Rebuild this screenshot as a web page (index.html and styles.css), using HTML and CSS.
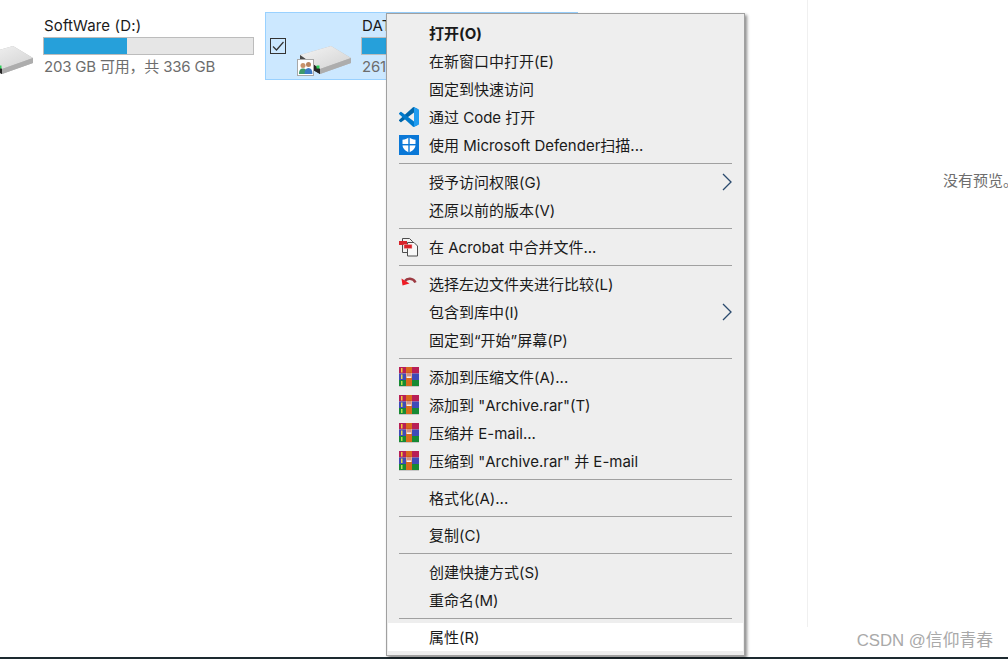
FILE: index.html
```html
<!DOCTYPE html>
<html lang="zh-CN">
<head>
<meta charset="utf-8">
<title>此电脑</title>
<link rel="stylesheet" href="styles.css">
</head>
<body>
<svg class="defs" width="0" height="0" aria-hidden="true">
  <defs>
    <linearGradient id="topface" x1="0" y1="0" x2="1" y2="1">
      <stop offset="0" stop-color="#f4f4f4"/><stop offset="1" stop-color="#d2d2d2"/>
    </linearGradient>
    <symbol id="drive" viewBox="0 0 54 30">
      <polygon points="2,10 33,1 53,13 53,18 22,29 2,16" fill="#b9b9b9"/>
      <polygon points="2,10 33,1 53,13 22,24" fill="url(#topface)"/>
      <polygon points="22,24 53,13 53,18 22,29" fill="#adadad"/>
      <polygon points="2,10 22,24 22,29 2,16" fill="#4a4a4a"/>
      <polygon points="13,18 22,24 22,29 13,24" fill="#262626"/>
      <rect x="18.500" y="20.500" width="3" height="3" fill="#2fd15a"/>
    </symbol>
    <symbol id="rar" viewBox="0 0 20 20">
      <rect x="0" y="0" width="20" height="6.500" fill="#b81f55"/>
      <rect x="0" y="6.500" width="20" height="6.500" fill="#3f4bb8"/>
      <rect x="0" y="13" width="20" height="6" fill="#178a34"/>
      <rect x="0" y="19" width="20" height="1" fill="#c8c8c8"/>
      <rect x="2" y="1" width="1.500" height="4.500" fill="#f0c93a"/>
      <rect x="2" y="7.500" width="1.500" height="4.500" fill="#e8d84a"/>
      <rect x="2" y="14" width="1.500" height="4" fill="#b8e04a"/>
      <rect x="7" y="0" width="6" height="19" fill="#d9691c"/>
      <rect x="7.500" y="6" width="5" height="5" fill="#f4f4f4"/>
      <rect x="8.500" y="5.500" width="1" height="4" fill="#b03020"/>
      <rect x="10.500" y="5.500" width="1" height="4" fill="#b03020"/>
    </symbol>
    <symbol id="chevron" viewBox="0 0 10 18">
      <path d="M1 1l8 8-8 8" fill="none" stroke="#2a4a6e" stroke-width="1.300"/>
    </symbol>
  </defs>
</svg>

<div class="window">
  <div class="content">
    <main class="drives">
      <section class="tile">
        <svg class="drive-icon"><use href="#drive"/></svg>
        <div class="info">
          <div class="name">SoftWare (D:)</div>
          <div class="bar"><div class="fill" style="width:39.700%"></div></div>
          <div class="sub">203 GB 可用，共 336 GB</div>
        </div>
      </section>
      <section class="tile selected">
        <span class="check">
          <svg width="14" height="14" viewBox="0 0 14 14"><path d="M2 7.500l3.500 3.500 7-8" fill="none" stroke="#333" stroke-width="1.200"/></svg>
        </span>
        <svg class="drive-icon"><use href="#drive"/></svg>
        <span class="share">
          <svg width="15" height="15" viewBox="0 0 15 15">
            <circle cx="5" cy="5.500" r="2.500" fill="#c9936b"/>
            <path d="M1 14c0-4 1.500-5.500 4-5.500s4 1.500 4 5.500z" fill="#3d9a6c"/>
            <circle cx="10.500" cy="4.500" r="2.500" fill="#b8835f"/>
            <path d="M6.500 14c0-4 1.500-6 4-6s4 2 4 6z" fill="#3b78c4"/>
          </svg>
        </span>
        <div class="info">
          <div class="name">DATA</div>
          <div class="bar"><div class="fill" style="width:39.700%"></div></div>
          <div class="sub">261 GB</div>
        </div>
      </section>
    </main>
    <aside class="preview">没有预览。</aside>
  </div>
  <footer class="footer"><span class="watermark">CSDN @信仰青春</span></footer>
  <div class="taskbar"></div>
</div>

<nav class="menu">
  <div class="item bold"><span class="ico"></span><span class="label">打开(O)</span></div>
  <div class="item"><span class="ico"></span><span class="label">在新窗口中打开(E)</span></div>
  <div class="item"><span class="ico"></span><span class="label">固定到快速访问</span></div>
  <div class="item"><span class="ico">
    <svg width="20" height="20" viewBox="0 0 100 100">
      <path fill="#0065a9" d="M96.460 10.800 75.860.900a6.230 6.230 0 0 0-7.100 1.200L1.330 63.700a4.160 4.160 0 0 0 0 6.160l5.500 5a4.160 4.160 0 0 0 5.320.24L93.400 13.400c2.720-2.070 6.600-.13 6.600 3.280v-.24a6.250 6.250 0 0 0-3.540-5.640z"/>
      <path fill="#007acc" d="M96.460 89.200 75.860 99.100a6.230 6.230 0 0 1-7.100-1.200L1.330 36.300a4.160 4.160 0 0 1 0-6.160l5.500-5a4.160 4.160 0 0 1 5.320-.24L93.400 86.600c2.720 2.070 6.600.13 6.600-3.280v.24a6.250 6.250 0 0 1-3.540 5.640z"/>
      <path fill="#1f9cf0" d="M75.860 99.130a6.230 6.230 0 0 1-7.100-1.210c2.300 2.300 6.240.67 6.240-2.600V4.680c0-3.270-3.940-4.900-6.240-2.600a6.230 6.230 0 0 1 7.100-1.200l20.600 9.900A6.250 6.250 0 0 1 100 16.400v67.200a6.250 6.250 0 0 1-3.540 5.630z"/>
    </svg></span><span class="label">通过 Code 打开</span></div>
  <div class="item"><span class="ico">
    <svg width="20" height="20" viewBox="0 0 20 20">
      <rect width="20" height="20" fill="#0a78d7"/>
      <path d="M10 2.500c2 1.300 4 2 6.500 2.200v5c0 3.500-2.500 6-6.500 7.800-4-1.800-6.500-4.300-6.500-7.800v-5C6 4.500 8 3.800 10 2.500z" fill="#fff"/>
      <rect x="9.300" y="2" width="1.400" height="16" fill="#0a78d7"/>
      <rect x="3" y="9" width="14" height="1.400" fill="#0a78d7"/>
    </svg></span><span class="label">使用 Microsoft Defender扫描...</span></div>
  <hr class="sep">
  <div class="item"><span class="ico"></span><span class="label">授予访问权限(G)</span><svg class="arrow"><use href="#chevron"/></svg></div>
  <div class="item"><span class="ico"></span><span class="label">还原以前的版本(V)</span></div>
  <hr class="sep">
  <div class="item"><span class="ico">
    <svg width="20" height="20" viewBox="0 0 20 20">
      <path d="M3.500 1.500h7l3 3v11h-10z" fill="#f2f2f2" stroke="#4d4d4d"/>
      <path d="M8.500 5.500h6.500l3.500 3.500v10h-10z" fill="#f8f8f8" stroke="#4d4d4d"/>
      <rect x="0" y="4" width="8" height="4" fill="#d8232a"/>
      <rect x="5" y="7.500" width="8" height="4" fill="#d8232a" stroke="#f2b8b8" stroke-width=".5"/>
    </svg></span><span class="label">在 Acrobat 中合并文件...</span></div>
  <hr class="sep">
  <div class="item"><span class="ico">
    <svg width="20" height="20" viewBox="0 0 20 20">
      <path d="M6 7c2-3 8-3.500 10.500 1.500" fill="none" stroke="#9c3a42" stroke-width="2.500"/>
      <path d="M2.500 4.500l1 7 7-2z" fill="#ee1c25"/>
    </svg></span><span class="label">选择左边文件夹进行比较(L)</span></div>
  <div class="item"><span class="ico"></span><span class="label">包含到库中(I)</span><svg class="arrow"><use href="#chevron"/></svg></div>
  <div class="item"><span class="ico"></span><span class="label">固定到“开始”屏幕(P)</span></div>
  <hr class="sep">
  <div class="item"><span class="ico"><svg width="20" height="20"><use href="#rar"/></svg></span><span class="label">添加到压缩文件(A)...</span></div>
  <div class="item"><span class="ico"><svg width="20" height="20"><use href="#rar"/></svg></span><span class="label">添加到 "Archive.rar"(T)</span></div>
  <div class="item"><span class="ico"><svg width="20" height="20"><use href="#rar"/></svg></span><span class="label">压缩并 E-mail...</span></div>
  <div class="item"><span class="ico"><svg width="20" height="20"><use href="#rar"/></svg></span><span class="label">压缩到 "Archive.rar" 并 E-mail</span></div>
  <hr class="sep">
  <div class="item"><span class="ico"></span><span class="label">格式化(A)...</span></div>
  <hr class="sep">
  <div class="item"><span class="ico"></span><span class="label">复制(C)</span></div>
  <hr class="sep">
  <div class="item"><span class="ico"></span><span class="label">创建快捷方式(S)</span></div>
  <div class="item"><span class="ico"></span><span class="label">重命名(M)</span></div>
  <hr class="sep">
  <div class="item hover"><span class="ico"></span><span class="label">属性(R)</span></div>
</nav>
</body>
</html>
```
FILE: styles.css
```css
* { box-sizing: border-box; }
html, body { margin: 0; height: 100%; overflow: hidden; background: #fff; }
body {
  position: relative;
  font-family: Inter, "Noto Sans CJK SC", sans-serif;
  font-size: 15px;
  color: #1a1a1a;
}
.defs { position: absolute; }

.window { display: flex; flex-direction: column; height: 659px; }
.content { display: flex; height: 627px; }
.drives {
  flex: 1;
  display: flex;
  align-items: flex-start;
  gap: 5px;
  margin-left: -53px;
  padding-top: 12px;
  min-width: 0;
}
.tile {
  position: relative;
  flex: none;
  display: flex;
  align-items: flex-start;
  width: 313px;
  height: 68px;
  border: 1px solid transparent;
  padding-left: 32px;
}
.tile.selected { background: #cce8ff; border-color: #99d1ff; }
.drive-icon { width: 54px; height: 30px; margin-top: 32px; flex: none; }
.info { margin-left: 9px; width: 211px; }
.name { height: 20px; line-height: 22px; margin: 2px 0 2px 1px; letter-spacing: .15px; white-space: nowrap; }
.bar { height: 18px; background: #e6e6e6; border: 1px solid #bcbcbc; }
.fill { height: 100%; background: #26a0da; }
.sub { height: 20px; line-height: 22px; margin: 1px 0 0 1px; color: #6d6d6d; letter-spacing: -.2px; white-space: nowrap; }

.check {
  position: absolute;
  left: 4px;
  top: 25px;
  width: 16px;
  height: 16px;
  border: 1px solid #333;
  display: flex;
  align-items: center;
  justify-content: center;
}
.check svg { display: block; }
.share {
  position: absolute;
  left: 31px;
  top: 46px;
  width: 17px;
  height: 17px;
  background: #fff;
  border: 1px solid #a8a8a8;
}
.share svg { display: block; }

.preview {
  flex: none;
  width: 201px;
  border-left: 1px solid #f0f0f0;
  padding: 171px 0 0 135px;
  line-height: 20px;
  color: #6d6d6d;
  white-space: nowrap;
}

.footer { height: 30px; display: flex; justify-content: flex-end; padding: 4px 15px 0 0; }
.watermark {
  font-family: "Liberation Sans", "Noto Sans CJK SC", sans-serif;
  font-size: 16.800px;
  line-height: 20px;
  color: #a9a9a9;
}
.taskbar { height: 2px; background: #1d2a30; }

.menu {
  position: absolute;
  left: 386px;
  top: 13px;
  width: 359px;
  height: 643px;
  padding: 5px 1px 4px;
  background: #eeeeee;
  border: 1px solid #a0a0a0;
  box-shadow: 2px 2px 3px rgba(0, 0, 0, .45);
}
.item {
  position: relative;
  display: flex;
  align-items: center;
  height: 28px;
  white-space: nowrap;
}
.item.bold { font-weight: 700; }
.item.hover { background: #fff; }
.label { margin-top: -1px; }
.ico {
  flex: none;
  width: 41px;
  padding-left: 11px;
  display: flex;
  align-items: center;
}
.ico svg { display: block; }
.arrow { position: absolute; right: 11px; top: 5px; width: 10px; height: 18px; }
.sep {
  margin: 4px 11px;
  height: 1px;
  border: 0;
  background: #a0a0a0;
}
```
